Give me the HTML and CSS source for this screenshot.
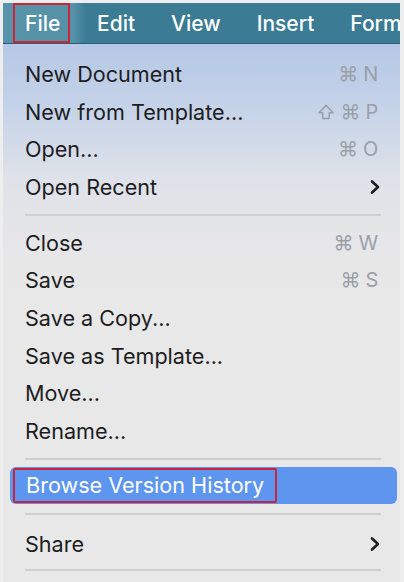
FILE: index.html
```html
<!DOCTYPE html>
<html>
<head>
<meta charset="utf-8">
<link rel="stylesheet" href="styles.css">
</head>
<body>
<div class="frame">
  <div class="menubar">
    <div class="mb-item mb-active"><span class="mb-file">File</span></div>
    <div class="mb-item mb-edit">Edit</div>
    <div class="mb-item">View</div>
    <div class="mb-item">Insert</div>
    <div class="mb-item">Form</div>
  </div>
  <div class="menu">
    <div class="row"><span>New Document</span><span class="key">⌘ N</span></div>
    <div class="row"><span>New from Template...</span><span class="key"><svg class="shift" viewBox="0 0 16 16" width="18" height="18"><path d="M8 2 L14.2 8.6 H10.9 V13.8 H5.1 V8.6 H1.8 Z" fill="none" stroke="#9ba0a8" stroke-width="1.4" stroke-linejoin="round"/></svg>⌘ P</span></div>
    <div class="row"><span>Open...</span><span class="key">⌘ O</span></div>
    <div class="row"><span>Open Recent</span><svg class="chev" viewBox="0 0 10 16" width="10" height="16"><path d="M2 2.5 L8 8 L2 13.5" fill="none" stroke="#1c1c1e" stroke-width="2.6" stroke-linecap="round" stroke-linejoin="round"/></svg></div>
    <div class="sep sep-a"></div>
    <div class="row"><span>Close</span><span class="key">⌘ W</span></div>
    <div class="row"><span>Save</span><span class="key">⌘ S</span></div>
    <div class="row"><span>Save a Copy...</span></div>
    <div class="row"><span>Save as Template...</span></div>
    <div class="row"><span>Move...</span></div>
    <div class="row"><span>Rename...</span></div>
    <div class="sep sep-b"></div>
    <div class="row row-hl"><span class="hl-box">Browse Version History</span></div>
    <div class="sep sep-c"></div>
    <div class="row row-share"><span>Share</span><svg class="chev" viewBox="0 0 10 16" width="10" height="16"><path d="M2 2.5 L8 8 L2 13.5" fill="none" stroke="#1c1c1e" stroke-width="2.6" stroke-linecap="round" stroke-linejoin="round"/></svg></div>
    <div class="sep sep-d"></div>
  </div>
</div>
</body>
</html>
```

FILE: styles.css
```css
html, body {
  margin: 0;
  padding: 0;
}
body {
  width: 404px;
  height: 582px;
  overflow: hidden;
  background: #ececec;
  font-family: Inter, "Noto Sans", sans-serif;
}
.frame {
  width: 404px;
  height: 582px;
  box-sizing: border-box;
  padding: 3px 4px 0 3px;
  background: #eeeeee;
  display: flex;
  flex-direction: column;
}
.menubar {
  height: 40px;
  flex: none;
  display: flex;
  align-items: stretch;
  overflow: hidden;
  background: #3b7b93;
  color: #ffffff;
  font-size: 21px;
  font-weight: 500;
  border-bottom: 1px solid #2a5d70;
}
.mb-item {
  flex: none;
  display: flex;
  align-items: center;
  padding: 0 18px;
  white-space: nowrap;
}
.mb-active {
  width: 83px;
  box-sizing: border-box;
  padding: 0 0 0 10px;
  background: linear-gradient(90deg, #5893a9 0%, #5591a7 85%, #3b7b93 100%);
  border-bottom: 1px solid #15262e;
  margin-bottom: -1px;
}
.mb-file {
  display: flex;
  align-items: center;
  height: 36px;
  padding: 0 8px 0 10px;
  border: 2px solid #c9263a;
}
.mb-edit { padding-left: 11px; }
.menu {
  flex: 1;
  display: flex;
  flex-direction: column;
  padding-top: 11px;
  background: linear-gradient(180deg, #b5c8e6 0px, #c4d2e8 60px, #dde1e9 130px, #e6e6e8 190px, #e8e8e8 260px);
  font-size: 21.6px;
  color: #1d1d1f;
}
.row {
  height: 37.7px;
  flex: none;
  display: flex;
  align-items: center;
  justify-content: space-between;
  padding: 0 22px 0 22px;
}
.key {
  display: flex;
  align-items: center;
  gap: 2px;
  color: #9ba0a8;
  font-size: 20px;
  letter-spacing: -0.3px;
}
.shift {
  margin-right: 3px;
}
.chev {
  margin-right: -2px;
}
.sep {
  flex: none;
  height: 2px;
  margin: 0 19px 0 22px;
  background: #cfcfcf;
}
.sep-a { margin-top: 8px; margin-bottom: 8px; }
.sep-b { margin-top: 8px; margin-bottom: 7px; }
.sep-c { margin-top: 9px; margin-bottom: 10px; }
.sep-d { margin-top: 6px; }
.row-hl {
  height: 37px;
  margin: 0 3px 0 7px;
  padding: 0 0 0 3px;
  background: #5d95ef;
  border-radius: 6px;
  color: #ffffff;
  justify-content: flex-start;
}
.hl-box {
  height: 31px;
  display: flex;
  align-items: center;
  padding: 0 11px 0 11px;
  border: 2px solid #c8243a;
  border-radius: 2px;
}
.row-share {
  height: 38px;
}
```
